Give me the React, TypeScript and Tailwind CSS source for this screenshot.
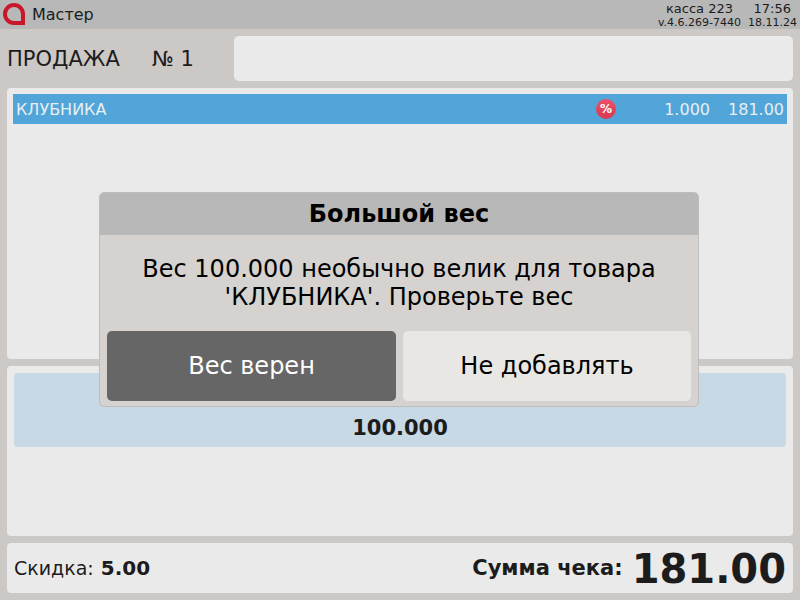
export default function App() {
  return (
    <div className="relative flex h-[600px] w-[800px] flex-col overflow-hidden bg-[#cbc8c5] font-['DejaVu_Sans',sans-serif] text-[#1c1c1c]">
      <header className="flex h-[29px] items-center justify-between bg-[#b8b8b8] pl-[3px] pr-[3px]">
        <div className="flex items-center gap-[7px]">
          <svg width="22" height="22" viewBox="0 0 22 22" className="mt-[-1px]">
            <path d="M20 20H11A9 9 0 1 1 20 11Z" fill="none" stroke="#c8162a" strokeWidth="4" />
          </svg>
          <span className="text-[16px] leading-none">Мастер</span>
        </div>
        <div className="mt-[2px] flex gap-[7px] text-right">
          <div className="flex flex-col items-end">
            <span className="pr-[8px] text-[13px] leading-[14px]">касса 223</span>
            <span className="text-[11px] leading-[13px]">v.4.6.269-7440</span>
          </div>
          <div className="flex flex-col items-end">
            <span className="pr-[6px] text-[13px] leading-[14px]">17:56</span>
            <span className="text-[11px] leading-[13px]">18.11.24</span>
          </div>
        </div>
      </header>

      <main className="flex flex-1 flex-col gap-[7px] px-[7px] pb-[7px] pt-[7px]">
        <div className="flex h-[45px] items-center">
          <div className="flex w-[227px] items-center pt-[2px] text-[21px]">
            <span className="w-[145px]">ПРОДАЖА</span>
            <span>№ 1</span>
          </div>
          <div className="h-full flex-1 rounded-[5px] bg-[#eaeaea]" />
        </div>

        <section className="h-[271px] rounded-[4px] bg-[#eaeaea] p-[6px]">
          <div className="flex h-[30px] items-center bg-[#52a5d9] pl-[3px] pr-[3px] text-[16px] text-[#e8eef2]">
            <span className="flex-1 pt-[2px]">КЛУБНИКА</span>
            <span className="mr-[48px] flex h-[20px] w-[20px] items-center justify-center rounded-full bg-gradient-to-b from-[#ec5068] to-[#d93850] text-[12px] font-bold text-white">%</span>
            <span className="w-[46px] pt-[2px] text-right">1.000</span>
            <span className="w-[74px] pt-[2px] text-right">181.00</span>
          </div>
        </section>

        <section className="h-[170px] rounded-[4px] bg-[#eaeaea] p-[7px]">
          <div className="flex h-[74px] items-end justify-center rounded-[4px] bg-[#c7d9e5] pb-[3px] text-[21px] font-bold">
            100.000
          </div>
        </section>

        <footer className="flex h-[50px] items-center justify-between rounded-[4px] bg-[#eaeaea] pl-[7px] pr-[7px]">
          <div className="flex items-center gap-[7px] text-[19px]">
            <span>Скидка:</span>
            <span className="text-[20px] font-bold">5.00</span>
          </div>
          <div className="flex items-center gap-[9px] pt-[2px]">
            <span className="text-[21px] font-bold">Сумма чека:</span>
            <span className="text-[40px] font-bold leading-none">181.00</span>
          </div>
        </footer>
      </main>

      <div className="absolute left-[99px] top-[192px] flex h-[215px] w-[600px] flex-col overflow-hidden rounded-[5px] border border-[#bdbdbd] bg-[#d5d2cf] text-black">
        <div className="flex h-[42px] items-center justify-center bg-[#b8b8b8] text-[24px] font-bold">Большой вес</div>
        <div className="flex h-[96px] items-center justify-center text-center text-[24px] leading-[28px]">
          <p>
            Вес 100.000 необычно велик для товара
            <br />
            'КЛУБНИКА'. Проверьте вес
          </p>
        </div>
        <div className="flex gap-[7px] px-[7px]">
          <button className="flex h-[70px] w-[289px] items-center justify-center rounded-[5px] bg-[#666666] text-[24px] text-white">Вес верен</button>
          <button className="flex h-[70px] flex-1 items-center justify-center rounded-[5px] bg-[#e8e7e4] text-[24px] text-black">Не добавлять</button>
        </div>
      </div>
    </div>
  );
}
